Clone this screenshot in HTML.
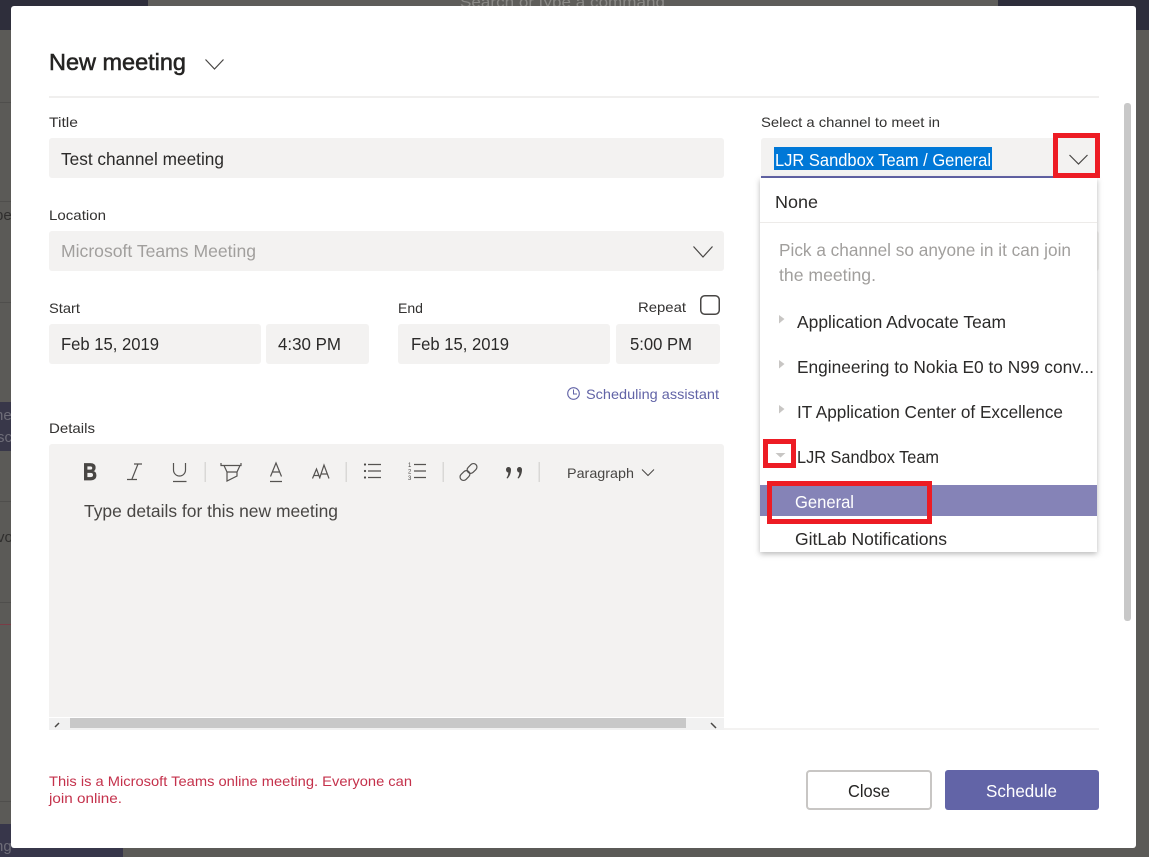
<!DOCTYPE html>
<html lang="en"><head><meta charset="utf-8"><title>New meeting</title>
<style>
html,body{margin:0;padding:0;width:1149px;height:857px;overflow:hidden;background:#5b5a57}
svg{display:block;position:absolute;left:0;top:0}
text{font-family:"Liberation Sans",sans-serif;white-space:pre}
.l{font-size:14px;fill:#333231}
.v{font-size:17.5px;fill:#2b2a29}
.g{font-size:17.5px;fill:#a19f9d}
.i{fill:none;stroke:#555351;stroke-width:1.2}
</style></head><body>
<svg width="1149" height="857" viewBox="0 0 1149 857" xmlns="http://www.w3.org/2000/svg">
<defs><filter id="s" x="-5%" y="-5%" width="110%" height="110%"><feDropShadow dx="0" dy="2" stdDeviation="3" flood-color="#000" flood-opacity=".28"/></filter></defs>
<!-- background -->
<rect width="1149" height="857" fill="#5b5a57"/>
<rect x="0" y="0" width="148" height="30" fill="#2e2e3b"/>
<rect x="998" y="0" width="151" height="30" fill="#2e2e3b"/>
<rect x="148" y="0" width="850" height="6" fill="#5e5d5a"/>
<text x="460" y="7" font-size="15" fill="#8a8986" textLength="205" lengthAdjust="spacingAndGlyphs">Search or type a command</text>
<rect x="0" y="402" width="11" height="49" fill="#383749"/>
<rect x="0" y="824" width="123" height="33" fill="#37364a"/>
<g fill="#4f4e4c"><rect y="102" width="11" height="1"/><rect y="201" width="11" height="1"/><rect y="302" width="11" height="1"/><rect y="501" width="11" height="1"/><rect y="602" width="11" height="1"/><rect y="801" width="11" height="1"/></g>
<rect y="624" width="11" height="1" fill="#7a3c46"/>
<text x="-5" y="220" font-size="15" fill="#2f2e2d">pe</text>
<text x="-5" y="420" font-size="15" fill="#6e6d78">ne</text>
<text x="-3" y="442" font-size="15" fill="#6e6d78">sc</text>
<text x="-3" y="542" font-size="15" fill="#2f2e2d">vo</text>
<text x="-5" y="851" font-size="15" fill="#6e6d78">ng</text>
<!-- modal -->
<rect x="11" y="6" width="1125" height="842" rx="3" fill="#fff"/>
<text x="49" y="70" font-size="23" fill="#252423" stroke="#252423" stroke-width=".55" textLength="137" lengthAdjust="spacingAndGlyphs">New meeting</text>
<path d="M205.500 59.500 L214.500 69 L223.500 59.500" fill="none" stroke="#484644" stroke-width="1.200"/>
<rect x="49" y="96" width="1050" height="2" fill="#f0efee"/>
<!-- left form -->
<text class="l" x="49" y="127" textLength="29" lengthAdjust="spacingAndGlyphs">Title</text>
<rect x="49" y="138" width="675" height="40" rx="3" fill="#f3f2f1"/>
<text class="v" x="61" y="165" textLength="163" lengthAdjust="spacingAndGlyphs">Test channel meeting</text>
<text class="l" x="49" y="220" textLength="57" lengthAdjust="spacingAndGlyphs">Location</text>
<rect x="49" y="231" width="675" height="40" rx="3" fill="#f3f2f1"/>
<text class="g" x="61" y="257" textLength="195" lengthAdjust="spacingAndGlyphs">Microsoft Teams Meeting</text>
<path d="M693.500 246.500 L703 257 L712.500 246.500" fill="none" stroke="#484644" stroke-width="1.200"/>
<text class="l" x="49" y="313" textLength="31" lengthAdjust="spacingAndGlyphs">Start</text>
<text class="l" x="398" y="313" textLength="25" lengthAdjust="spacingAndGlyphs">End</text>
<text class="l" x="638" y="312" textLength="48" lengthAdjust="spacingAndGlyphs">Repeat</text>
<rect x="700.750" y="295.750" width="18.500" height="18.500" rx="4" fill="#fff" stroke="#484644" stroke-width="1.500"/>
<g fill="#f3f2f1"><rect x="49" y="324" width="212" height="40" rx="3"/><rect x="266" y="324" width="103" height="40" rx="3"/><rect x="398" y="324" width="212" height="40" rx="3"/><rect x="616" y="324" width="104" height="40" rx="3"/></g>
<text class="v" x="61" y="350" textLength="98" lengthAdjust="spacingAndGlyphs">Feb 15, 2019</text>
<text class="v" x="278" y="350" textLength="63" lengthAdjust="spacingAndGlyphs">4:30 PM</text>
<text class="v" x="411" y="350" textLength="98" lengthAdjust="spacingAndGlyphs">Feb 15, 2019</text>
<text class="v" x="630" y="350" textLength="62" lengthAdjust="spacingAndGlyphs">5:00 PM</text>
<circle cx="573.500" cy="393.500" r="5.800" fill="none" stroke="#6264a7" stroke-width="1.100"/>
<path d="M573.500 389.500 V394 H577" fill="none" stroke="#6264a7" stroke-width="1"/>
<text x="586" y="399" font-size="14" fill="#6264a7" textLength="133" lengthAdjust="spacingAndGlyphs">Scheduling assistant</text>
<text class="l" x="49" y="433" textLength="46" lengthAdjust="spacingAndGlyphs">Details</text>
<!-- editor -->
<path d="M49 717 V447 a3 3 0 0 1 3-3 H721 a3 3 0 0 1 3 3 V717 Z" fill="#f3f2f1"/>
<rect x="49" y="718" width="675" height="12" fill="#f1f1f1"/>
<rect x="70" y="718" width="616" height="10" fill="#c8c8c8"/>
<path d="M55 727 L59 723" stroke="#484644" stroke-width="1.500"/>
<path d="M711 723 L716 728" stroke="#484644" stroke-width="1.500"/>
<rect x="724" y="728" width="375" height="2" fill="#f3f2f1"/>
<!-- toolbar -->
<text x="83" y="480" font-size="24" font-weight="bold" fill="#484644" stroke="#484644" stroke-width=".7" textLength="14" lengthAdjust="spacingAndGlyphs">B</text>
<path class="i" d="M134 464 H142 M138 464 L132 479 M127 479.500 H137"/>
<path class="i" d="M173.500 463 V470 a6 6 0 0 0 12 0 V463 M173 481.500 H186.500"/>
<rect x="204.500" y="462" width="1.500" height="20" fill="#d9d8d6"/>
<path class="i" d="M221 463 V465.500 H241 V463 M224 465.500 L227 472 H237 L240 465.500 M227 472 V481 L237 476 V472"/>
<path class="i" d="M270.500 476.500 L276 463 L281.500 476.500 M272.500 472 H279.500 M270 481.500 H282"/>
<path class="i" d="M312.500 478.500 L316.500 469 L320 478.500 M314 475.500 H319 M319.500 478.500 L324 465 L329 478.500 M321 474 H327.500"/>
<rect x="345.500" y="462" width="1.500" height="20" fill="#d9d8d6"/>
<path class="i" d="M368 464.500 H381 M368 471 H381 M368 477.500 H381"/>
<g fill="#484644"><circle cx="365" cy="464.500" r="1.100"/><circle cx="365" cy="471" r="1.100"/><circle cx="365" cy="477.500" r="1.100"/></g>
<path class="i" d="M414 464.500 H426 M414 471 H426 M414 477.500 H426"/>
<text x="408" y="467" font-size="6" fill="#484644">1</text><text x="408" y="473.500" font-size="6" fill="#484644">2</text><text x="408" y="480" font-size="6" fill="#484644">3</text>
<rect x="442.500" y="462" width="1.500" height="20" fill="#d9d8d6"/>
<g class="i" transform="rotate(-45 468.500 472)"><rect x="458" y="468.500" width="11" height="7" rx="3.500"/><rect x="468" y="468.500" width="11" height="7" rx="3.500"/></g>
<path fill="#484644" d="M506 469.500 a2.500 2.500 0 1 1 5 0 C511 473.500 509.500 476.500 507.500 478.500 L506.500 478 C507.800 476 508.300 474.500 508.300 472.500 C507 472.500 506 471 506 469.500 Z M517 469.500 a2.500 2.500 0 1 1 5 0 C522 473.500 520.500 476.500 518.500 478.500 L517.500 478 C518.800 476 519.300 474.500 519.300 472.500 C518 472.500 517 471 517 469.500 Z"/>
<rect x="538.500" y="462" width="1.500" height="20" fill="#d9d8d6"/>
<text x="567" y="478" font-size="14" fill="#484644" textLength="67" lengthAdjust="spacingAndGlyphs">Paragraph</text>
<path d="M642 469.500 L648 475.500 L654 469.500" fill="none" stroke="#484644" stroke-width="1"/>
<text x="84" y="517" font-size="17.500" fill="#484644" textLength="254" lengthAdjust="spacingAndGlyphs">Type details for this new meeting</text>
<!-- footer -->
<text x="49" y="786" font-size="14" fill="#c4314b" textLength="363" lengthAdjust="spacingAndGlyphs">This is a Microsoft Teams online meeting. Everyone can</text>
<text x="49" y="803" font-size="14" fill="#c4314b" textLength="73" lengthAdjust="spacingAndGlyphs">join online.</text>
<rect x="807" y="771" width="124" height="38" rx="3" fill="#fff" stroke="#c8c6c4" stroke-width="2"/>
<text x="848" y="797" font-size="17.500" fill="#252423" textLength="42" lengthAdjust="spacingAndGlyphs">Close</text>
<rect x="945" y="770" width="154" height="40" rx="3" fill="#6264a7"/>
<text x="986" y="797" font-size="17.500" fill="#fff" textLength="71" lengthAdjust="spacingAndGlyphs">Schedule</text>
<!-- scrollbar -->
<rect x="1124" y="103" width="7" height="518" rx="3" fill="#c8c8c8"/>
<!-- right column -->
<text class="l" x="761" y="127" textLength="179" lengthAdjust="spacingAndGlyphs">Select a channel to meet in</text>
<rect x="761" y="231" width="338" height="40" rx="3" fill="#f3f2f1"/>
<path d="M761 176 V141 a3 3 0 0 1 3-3 H1096 a3 3 0 0 1 3 3 V176 Z" fill="#f3f2f1"/>
<rect x="761" y="176" width="338" height="2" fill="#6264a7"/>
<rect x="774" y="147" width="218" height="23" fill="#0078d7"/>
<text x="775" y="166" font-size="17.500" fill="#fff" textLength="216" lengthAdjust="spacingAndGlyphs">LJR Sandbox Team / General</text>
<path d="M1069.500 155 L1078.500 164 L1087.500 155" fill="none" stroke="#484644" stroke-width="1.200"/>
<!-- dropdown -->
<rect x="760" y="178" width="337" height="374" fill="#fff" filter="url(#s)"/>
<text class="v" x="775" y="208" textLength="43" lengthAdjust="spacingAndGlyphs">None</text>
<rect x="760" y="222" width="337" height="1" fill="#edebe9"/>
<text class="g" x="779" y="256" textLength="292" lengthAdjust="spacingAndGlyphs">Pick a channel so anyone in it can join</text>
<text class="g" x="779" y="281" textLength="97" lengthAdjust="spacingAndGlyphs">the meeting.</text>
<g fill="#c8c6c4"><path d="M779 315 L784.500 319 L779 323.500 Z"/><path d="M779 360 L784.500 364 L779 368.500 Z"/><path d="M779 405 L784.500 409 L779 413.500 Z"/><path d="M775.500 453 H785.500 L780.500 457.500 Z"/></g>
<text class="v" x="797" y="328" textLength="209" lengthAdjust="spacingAndGlyphs">Application Advocate Team</text>
<text class="v" x="797" y="373" textLength="297" lengthAdjust="spacingAndGlyphs">Engineering to Nokia E0 to N99 conv...</text>
<text class="v" x="797" y="418" textLength="266" lengthAdjust="spacingAndGlyphs">IT Application Center of Excellence</text>
<text class="v" x="797" y="463" textLength="142" lengthAdjust="spacingAndGlyphs">LJR Sandbox Team</text>
<rect x="760" y="485" width="337" height="31" fill="#8583b7"/>
<text x="795" y="508" font-size="17.500" fill="#fff" textLength="59" lengthAdjust="spacingAndGlyphs">General</text>
<text class="v" x="795" y="545" textLength="152" lengthAdjust="spacingAndGlyphs">GitLab Notifications</text>
<!-- red annotation boxes -->
<g fill="none" stroke="#ed1c24" stroke-width="5">
<rect x="1055.500" y="135.500" width="42" height="40"/>
<rect x="765.500" y="441.500" width="28" height="24"/>
<rect x="769.500" y="483.500" width="160" height="38"/>
</g>
</svg>
</body></html>
